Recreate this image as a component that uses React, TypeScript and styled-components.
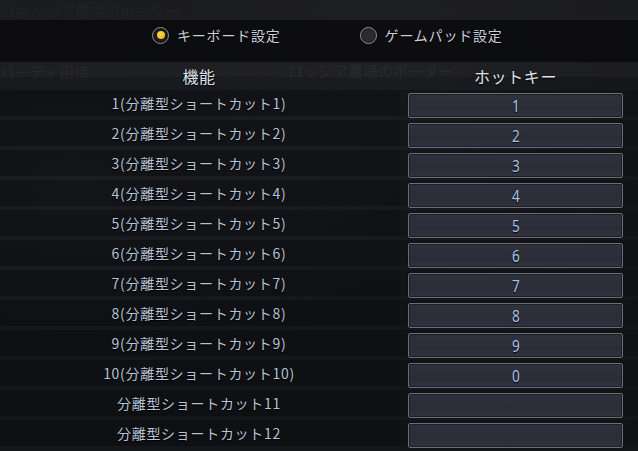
import React from "react";
import styled, { createGlobalStyle } from "styled-components";

const Global = createGlobalStyle`
  html, body { margin: 0; padding: 0; background: #141518; }
  body {
    width: 638px; height: 451px; overflow: hidden;
    font-family: "Noto Sans CJK JP", "Noto Sans", sans-serif;
  }
`;

const Screen = styled.div`
  position: relative;
  width: 638px;
  height: 451px;
  overflow: hidden;
  background:
    radial-gradient(ellipse at 12% 40%, rgba(60, 60, 66, 0.2), transparent 45%),
    radial-gradient(ellipse at 60% 20%, rgba(50, 52, 58, 0.2), transparent 50%),
    #151619;
`;

const GhostText = styled.div<{ $x: number; $y: number; $size?: number }>`
  position: absolute;
  left: ${(p) => p.$x}px;
  top: ${(p) => p.$y}px;
  font-size: ${(p) => p.$size ?? 15}px;
  line-height: 1;
  color: rgba(200, 205, 215, 0.07);
  white-space: nowrap;
  pointer-events: none;
`;

const FaintBand = styled.div`
  position: absolute;
  left: 0;
  right: 0;
  top: 62px;
  height: 15px;
  background: rgba(40, 41, 46, 0.4);
`;

const Content = styled.div`
  position: relative;
  display: flex;
  flex-direction: column;
`;

const TopStrip = styled.div`
  height: 20px;
  background: rgba(35, 36, 40, 0.45);
`;

const RadioBar = styled.div`
  height: 42px;
  background: rgba(8, 9, 11, 0.72);
  display: flex;
  align-items: flex-start;
  padding-top: 2px;
  box-sizing: border-box;
`;

const RadioItem = styled.div<{ $left: number }>`
  display: flex;
  align-items: center;
  gap: 8px;
  margin-left: ${(p) => p.$left}px;
  height: 26px;
`;

const RadioCircle = styled.div<{ $on?: boolean }>`
  width: 15px;
  height: 15px;
  border-radius: 50%;
  border: 1.5px solid #8e9096;
  background: ${(p) => (p.$on ? "#1b1b1d" : "#2a2b2f")};
  display: flex;
  align-items: center;
  justify-content: center;
  box-shadow: inset 0 0 2px rgba(0, 0, 0, 0.8);
  &::after {
    content: "";
    display: ${(p) => (p.$on ? "block" : "none")};
    width: 8px;
    height: 8px;
    border-radius: 50%;
    background: radial-gradient(circle at 40% 40%, #ffd84a, #e6a90f);
  }
`;

const RadioLabel = styled.span`
  font-size: 14px;
  letter-spacing: 0.8px;
  color: #c9d1dc;
  text-shadow: 0 1px 1px #000;
`;

const HeaderRow = styled.div`
  display: grid;
  grid-template-columns: 398px 215px;
  column-gap: 10px;
  height: 28px;
  align-items: center;
`;

const HeaderCell = styled.div`
  text-align: center;
  font-size: 16px;
  letter-spacing: 0.6px;
  color: #dde2ea;
  text-shadow: 0 1px 2px #000;
  line-height: 1;
`;

const Rows = styled.div`
  display: flex;
  flex-direction: column;
`;

const Row = styled.div`
  display: grid;
  grid-template-columns: 398px 215px;
  column-gap: 10px;
  height: 26px;
  margin-bottom: 4px;
  align-items: center;
  background: linear-gradient(
    to right,
    rgba(6, 7, 9, 0.42) 0px,
    rgba(6, 7, 9, 0.42) 400px,
    rgba(6, 7, 9, 0.25) 400px
  );
`;

const Label = styled.div`
  text-align: center;
  font-size: 14px;
  letter-spacing: 0.7px;
  color: #b6c3d5;
  text-shadow: 0 1px 1px #000;
  line-height: 1;
`;

const KeyBox = styled.div`
  height: 25px;
  box-sizing: border-box;
  border: 1px solid #6b6e77;
  border-radius: 2px;
  background: linear-gradient(to bottom, #2f323d, #2a2d37 60%, #30333e);
  box-shadow: inset 0 0 0 1px #1d1f26, 0 0 1px #000;
  display: flex;
  align-items: center;
  justify-content: center;
  transform: translateY(2px);
`;

const KeyText = styled.span`
  display: inline-block;
  font-family: "Noto Sans", sans-serif;
  font-weight: 400;
  font-size: 17px;
  line-height: 1;
  color: #aec4e4;
  text-shadow: 0 1px 1px #000;
  transform: scaleX(0.8);
`;

const rows: { label: string; key: string }[] = [
  { label: "1(分離型ショートカット1)", key: "1" },
  { label: "2(分離型ショートカット2)", key: "2" },
  { label: "3(分離型ショートカット3)", key: "3" },
  { label: "4(分離型ショートカット4)", key: "4" },
  { label: "5(分離型ショートカット5)", key: "5" },
  { label: "6(分離型ショートカット6)", key: "6" },
  { label: "7(分離型ショートカット7)", key: "7" },
  { label: "8(分離型ショートカット8)", key: "8" },
  { label: "9(分離型ショートカット9)", key: "9" },
  { label: "10(分離型ショートカット10)", key: "0" },
  { label: "分離型ショートカット11", key: "" },
  { label: "分離型ショートカット12", key: "" },
];

export default function App() {
  return (
    <>
      <Global />
      <Screen>
        <FaintBand />
        <GhostText $x={0} $y={3}>ロポッジア農場のポーター</GhostText>
        <GhostText $x={0} $y={64} $size={15}>パーティ招待</GhostText>
        <GhostText $x={288} $y={63}>ロッジア農場のポーター</GhostText>
        <Content>
          <TopStrip />
          <RadioBar>
            <RadioItem $left={152}>
              <RadioCircle $on />
              <RadioLabel>キーボード設定</RadioLabel>
            </RadioItem>
            <RadioItem $left={79}>
              <RadioCircle />
              <RadioLabel>ゲームパッド設定</RadioLabel>
            </RadioItem>
          </RadioBar>
          <HeaderRow>
            <HeaderCell>機能</HeaderCell>
            <HeaderCell>ホットキー</HeaderCell>
          </HeaderRow>
          <Rows>
            {rows.map((r) => (
              <Row key={r.label}>
                <Label>{r.label}</Label>
                <KeyBox>
                  <KeyText>{r.key}</KeyText>
                </KeyBox>
              </Row>
            ))}
          </Rows>
        </Content>
      </Screen>
    </>
  );
}
